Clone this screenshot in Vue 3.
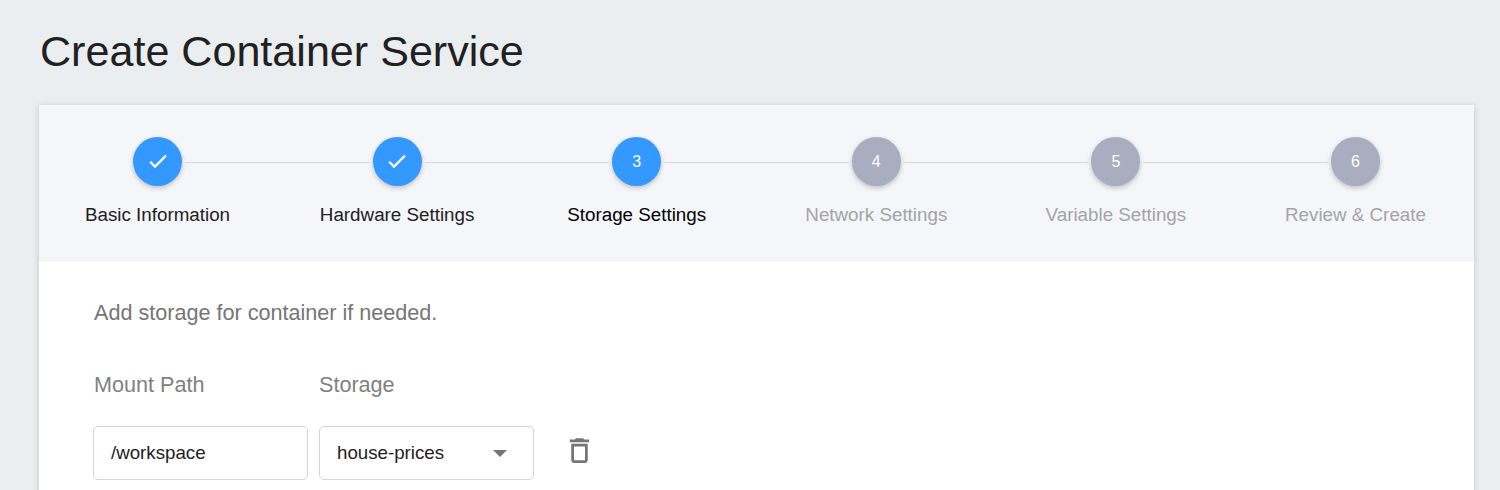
<script setup>
const steps = [
  { label: 'Basic Information', done: true },
  { label: 'Hardware Settings', done: true },
  { label: 'Storage Settings', active: true, n: 3 },
  { label: 'Network Settings', n: 4 },
  { label: 'Variable Settings', n: 5 },
  { label: 'Review & Create', n: 6 },
]
</script>

<template>
  <div class="page">
    <h1 class="title">Create Container Service</h1>
    <div class="card">
      <div class="stepper">
        <div
          v-for="(s, i) in steps"
          :key="s.label"
          class="step"
          :class="{ done: s.done, active: s.active }"
        >
          <div class="track">
            <span class="line" :class="{ hidden: i === 0 }"></span>
            <span class="dot">
              <svg class="check" v-if="s.done" width="24" height="24" viewBox="0 0 24 24" fill="#fff">
                <path d="M9 16 5 12l-1.600 1.600L9 19.200 20.800 7.400 19.200 5.800z" />
              </svg>
              <template v-else>{{ s.n }}</template>
            </span>
            <span class="line" :class="{ hidden: i === steps.length - 1 }"></span>
          </div>
          <div class="label">{{ s.label }}</div>
        </div>
      </div>
      <div class="body">
        <p class="hint">Add storage for container if needed.</p>
        <div class="heads">
          <div class="head">Mount Path</div>
          <div class="head">Storage</div>
        </div>
        <div class="row">
          <div class="field">/workspace</div>
          <div class="field select">
            <span>house-prices</span>
            <svg class="caret" width="14" height="7" viewBox="0 0 14 7" fill="#757575">
              <path d="M0 0h14L7 7z" />
            </svg>
          </div>
          <svg class="trash" width="33" height="33" viewBox="0 0 24 24" fill="#757575">
            <path d="M6 19c0 1.100.9 2 2 2h8c1.100 0 2-.9 2-2V7H6v12zM8 9h8v10H8V9zm7.500-5-1-1h-5l-1 1H5v2h14V4h-3.500z" />
          </svg>
        </div>
      </div>
    </div>
  </div>
</template>

<style>
html, body {
  margin: 0;
  height: 100%;
  overflow: hidden;
  background: #ebeef1;
}
</style>

<style scoped>
.page {
  height: 490px;
  overflow: hidden;
  box-sizing: border-box;
  padding: 0 26px 0 39px;
  font-family: "Liberation Sans", Arial, sans-serif;
  background: #ebeef1;
}
.title {
  margin: 0;
  padding: 28px 0 0 1px;
  height: 105px;
  box-sizing: border-box;
  font-size: 43.1px;
  line-height: 47px;
  font-weight: 400;
  color: #212121;
}
.card {
  background: #fff;
  height: 500px;
  box-shadow: 0 1px 6px rgba(0, 0, 0, 0.18);
}
.stepper {
  display: grid;
  grid-template-columns: repeat(6, 239.6px);
  height: 157px;
  box-sizing: border-box;
  padding-top: 32px;
  background: #f4f6fa;
  overflow: hidden;
  justify-content: center;
}
.step {
  display: flex;
  flex-direction: column;
  align-items: center;
}
.track {
  width: 100%;
  display: flex;
  align-items: center;
  gap: 3px;
}
.line {
  flex: 1;
  height: 1px;
  margin-top: 2px;
  background: #d5d7de;
}
.line.hidden {
  background: transparent;
}
.dot {
  width: 49px;
  height: 49px;
  border-radius: 50%;
  display: flex;
  align-items: center;
  justify-content: center;
  background: #a8aec0;
  color: #fff;
  font-size: 16px;
  box-shadow: 0 2px 5px rgba(0, 0, 0, 0.22);
}
.check {
  margin-bottom: 1px;
}
.done .dot,
.active .dot {
  background: #3399ff;
}
.label {
  margin-top: 18px;
  font-size: 18.8px;
  line-height: 21px;
  color: #a4a4a4;
}
.done .label {
  color: #212121;
}
.active .label {
  color: #000;
}
.body {
  padding: 39px 54px 0;
}
.hint {
  margin: 0;
  padding-left: 1px;
  font-size: 21.6px;
  line-height: 24px;
  color: #757575;
}
.heads {
  display: flex;
  gap: 11px;
  margin-top: 48px;
}
.head {
  width: 215px;
  font-size: 21.6px;
  line-height: 24px;
  color: #808080;
}
.head:first-child {
  text-indent: 1px;
}
.row {
  display: flex;
  align-items: center;
  gap: 11px;
  margin-top: 29px;
}
.field {
  width: 215px;
  height: 54px;
  box-sizing: border-box;
  padding: 0 17px;
  display: flex;
  align-items: center;
  border: 1px solid #d4d4d4;
  border-radius: 5px;
  font-size: 18.72px;
  color: #212121;
}
.select {
  justify-content: space-between;
  padding-right: 26px;
}
.trash {
  margin-left: 18px;
  margin-top: -6px;
}
</style>
